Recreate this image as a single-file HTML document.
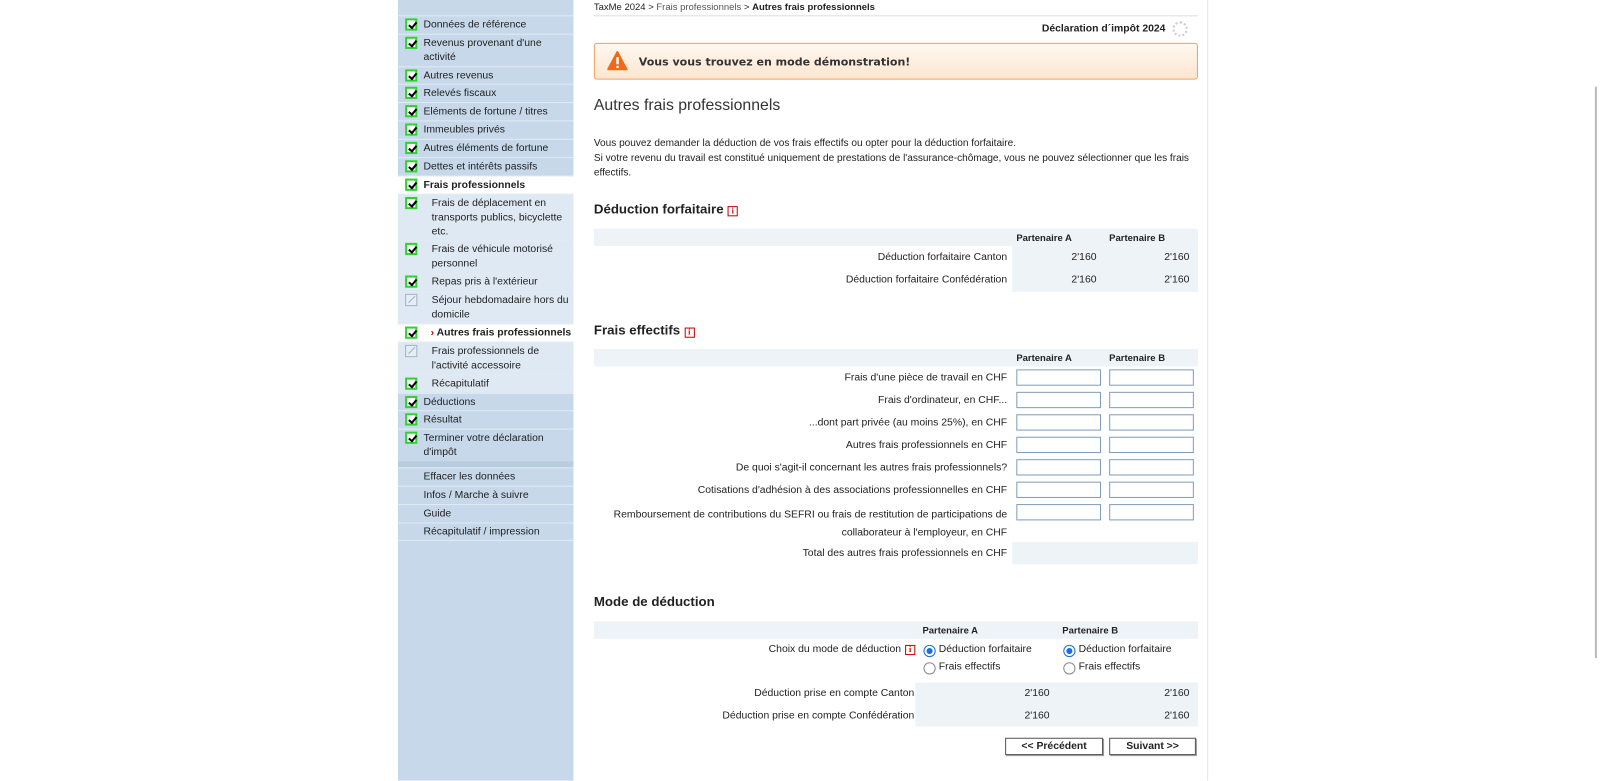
<!DOCTYPE html>
<html><head><meta charset="utf-8"><style>
*{margin:0;padding:0;box-sizing:border-box}
body{width:1600px;height:765px;background:#fff;overflow:hidden;margin:0}
#w{position:absolute;left:0;top:0;width:1568px;height:750px;transform:scale(1.0204);transform-origin:0 0;font-family:"Liberation Sans",Arial,sans-serif;font-size:10.2px;color:#222}
.a{position:absolute;white-space:nowrap}
#side{position:absolute;left:390px;top:0;width:172px;height:765px;background:#c6d8e9}
.r{position:absolute;left:0;width:172px;border-top:1px solid #e3ebf3;line-height:14px;padding-left:25px;padding-top:2px;white-space:nowrap}
.r.s{background:#dfe9f3;padding-left:33px}
.r.w{background:#fff}
.cb{position:absolute;left:7px;top:2px;width:12px;height:12px;border:2px solid #2fd12f;background:#fff}
.cb::after{content:"";position:absolute;left:2.5px;top:0px;width:3px;height:6px;border:solid #000;border-width:0 2px 2px 0;transform:rotate(40deg)}
.cg{position:absolute;left:7px;top:2px;width:12px;height:12px;border:1px solid #9fb3c5;background:#e5edf5}
.cg::after{content:"";position:absolute;left:1px;top:4px;width:9px;height:1px;background:#9fb3c5;transform:rotate(-45deg)}
.band{position:absolute;background:#eef3f8}
.h{font-size:13px;font-weight:bold;color:#222}
.i{display:inline-block;width:10px;height:10px;border:1px solid #c00;color:#c00;font-size:8px;line-height:8px;text-align:center;font-weight:bold;vertical-align:0px;margin-left:4px;font-family:"Liberation Serif",serif}
.inp{position:absolute;width:83px;height:16px;border:1px solid #7f9db9;background:#fff}
.lbl{position:absolute;right:581px;text-align:right;white-space:nowrap}
.b{font-weight:bold;font-size:9.3px}
.rad{position:absolute;width:12px;height:12px;border-radius:50%;border:1px solid #888;background:#fff}
.rad.on{border-color:#1a6fd8}.rad.on::after{content:"";position:absolute;left:2px;top:2px;width:6px;height:6px;border-radius:50%;background:#1a6fd8}
.btn{position:absolute;height:17px;border:1px solid #555;background:#fff;font-weight:bold;text-align:center;line-height:15px;box-shadow:1px 1px 0 #999}
</style></head><body><div id="w">
<div class="a" style="left:1183px;top:0;width:1px;height:765px;background:#e4e4e4"></div>
<div class="a" style="left:1563px;top:85px;width:2px;height:560px;background:#bbb"></div>
<div id="side">
<div class="r" style="top:15px;height:18px"><span class="cb"></span>Données de référence</div>
<div class="r" style="top:33px;height:32px"><span class="cb"></span>Revenus provenant d'une<br>activité</div>
<div class="r" style="top:65px;height:17px"><span class="cb"></span>Autres revenus</div>
<div class="r" style="top:82px;height:18px"><span class="cb"></span>Relevés fiscaux</div>
<div class="r" style="top:100px;height:18px"><span class="cb"></span>Eléments de fortune / titres</div>
<div class="r" style="top:118px;height:18px"><span class="cb"></span>Immeubles privés</div>
<div class="r" style="top:136px;height:18px"><span class="cb"></span>Autres éléments de fortune</div>
<div class="r" style="top:154px;height:18px"><span class="cb"></span>Dettes et intérêts passifs</div>
<div class="r w" style="top:172px;height:18px;font-weight:bold"><span class="cb"></span>Frais professionnels</div>
<div class="r s" style="top:190px;height:45px"><span class="cb"></span>Frais de déplacement en<br>transports publics, bicyclette<br>etc.</div>
<div class="r s" style="top:235px;height:32px"><span class="cb"></span>Frais de véhicule motorisé<br>personnel</div>
<div class="r s" style="top:267px;height:18px"><span class="cb"></span>Repas pris à l'extérieur</div>
<div class="r s" style="top:285px;height:32px"><span class="cg"></span>Séjour hebdomadaire hors du<br>domicile</div>
<div class="r s w" style="top:317px;height:18px;font-weight:bold;padding-left:32px"><span class="cb"></span><span style="color:#c00">›</span> Autres frais professionnels</div>
<div class="r s" style="top:335px;height:32px"><span class="cg"></span>Frais professionnels de<br>l'activité accessoire</div>
<div class="r s" style="top:367px;height:18px"><span class="cb"></span>Récapitulatif</div>
<div class="r" style="top:385px;height:17px"><span class="cb"></span>Déductions</div>
<div class="r" style="top:402px;height:18px"><span class="cb"></span>Résultat</div>
<div class="r" style="top:420px;height:32px"><span class="cb"></span>Terminer votre déclaration<br>d'impôt</div>
<div class="a" style="left:0;top:452px;width:172px;height:6px;background:#b9cde0"></div>
<div class="r" style="top:458px;height:18px">Effacer les données</div>
<div class="r" style="top:476px;height:18px">Infos / Marche à suivre</div>
<div class="r" style="top:494px;height:18px">Guide</div>
<div class="r" style="top:512px;height:18px;border-bottom:1px solid #e3ebf3">Récapitulatif / impression</div>
</div>

<div class="a" style="left:582px;top:2px;font-size:9.3px">TaxMe 2024 &gt; <span style="color:#555">Frais professionnels</span> &gt; <b>Autres frais professionnels</b></div>
<div class="a" style="left:582px;top:15px;width:592px;height:1px;background:#ddd"></div>
<div class="a" style="left:1021px;top:23px;font-weight:bold">Déclaration d´impôt 2024</div>
<div class="a" style="left:1149px;top:21px;width:15px;height:15px;border-radius:50%;border:2px dotted #ccc"></div>
<div class="a" style="left:582px;top:42px;width:592px;height:36px;border:1px solid #f0a060;border-radius:3px;background:linear-gradient(#fff8f0,#fde6d0)"></div>
<svg class="a" style="left:595px;top:50px" width="20" height="19" viewBox="0 0 20 19"><path d="M10 1 L19 18 H1 Z" fill="#f06a1a" stroke="#f06a1a" stroke-linejoin="round" stroke-width="2"/><rect x="9" y="6" width="2.4" height="7" fill="#fff"/><rect x="9" y="14.5" width="2.4" height="2.2" fill="#fff"/></svg>
<div class="a" style="left:626px;top:54px;font-family:'DejaVu Sans',sans-serif;font-weight:bold;font-size:10.8px;color:#333">Vous vous trouvez en mode démonstration!</div>
<div class="a" style="left:582px;top:95px;font-size:15.5px;color:#333">Autres frais professionnels</div>
<div class="a" style="left:582px;top:134px;line-height:14.5px;font-size:9.9px">Vous pouvez demander la déduction de vos frais effectifs ou opter pour la déduction forfaitaire.<br>Si votre revenu du travail est constitué uniquement de prestations de l'assurance-chômage, vous ne pouvez sélectionner que les frais<br>effectifs.</div>

<div class="a h" style="left:582px;top:197px">Déduction forfaitaire<span class="i">i</span></div>
<div class="band" style="left:582px;top:224px;width:592px;height:17px"></div>
<div class="band" style="left:992px;top:241px;width:182px;height:45px"></div>
<div class="a b" style="left:996px;top:228px">Partenaire A</div>
<div class="a b" style="left:1087px;top:228px">Partenaire B</div>
<div class="lbl" style="top:247px">Déduction forfaitaire Canton</div>
<div class="lbl" style="top:269px">Déduction forfaitaire Confédération</div>
<div class="a" style="left:1050px;top:247px">2'160</div><div class="a" style="left:1141px;top:247px">2'160</div>
<div class="a" style="left:1050px;top:269px">2'160</div><div class="a" style="left:1141px;top:269px">2'160</div>

<div class="a h" style="left:582px;top:316px">Frais effectifs<span class="i">i</span></div>
<div class="band" style="left:582px;top:342px;width:592px;height:17px"></div>
<div class="a b" style="left:996px;top:346px">Partenaire A</div>
<div class="a b" style="left:1087px;top:346px">Partenaire B</div>
<div class="lbl" style="top:365px">Frais d'une pièce de travail en CHF</div>
<div class="lbl" style="top:387px">Frais d'ordinateur, en CHF...</div>
<div class="lbl" style="top:409px">...dont part privée (au moins 25%), en CHF</div>
<div class="lbl" style="top:431px">Autres frais professionnels en CHF</div>
<div class="lbl" style="top:453px">De quoi s'agit-il concernant les autres frais professionnels?</div>
<div class="lbl" style="top:475px">Cotisations d'adhésion à des associations professionnelles en CHF</div>
<div class="lbl" style="top:496px;line-height:18px">Remboursement de contributions du SEFRI ou frais de restitution de participations de<br>collaborateur à l'employeur, en CHF</div>
<div class="lbl" style="top:537px">Total des autres frais professionnels en CHF</div>
<div class="band" style="left:992px;top:531px;width:182px;height:22px"></div>
<div class="inp" style="left:996px;top:362px"></div><div class="inp" style="left:1087px;top:362px"></div>
<div class="inp" style="left:996px;top:384px"></div><div class="inp" style="left:1087px;top:384px"></div>
<div class="inp" style="left:996px;top:406px"></div><div class="inp" style="left:1087px;top:406px"></div>
<div class="inp" style="left:996px;top:428px"></div><div class="inp" style="left:1087px;top:428px"></div>
<div class="inp" style="left:996px;top:450px"></div><div class="inp" style="left:1087px;top:450px"></div>
<div class="inp" style="left:996px;top:472px"></div><div class="inp" style="left:1087px;top:472px"></div>
<div class="inp" style="left:996px;top:494px"></div><div class="inp" style="left:1087px;top:494px"></div>

<div class="a h" style="left:582px;top:582px">Mode de déduction</div>
<div class="band" style="left:582px;top:609px;width:592px;height:17px"></div>
<div class="a b" style="left:904px;top:613px">Partenaire A</div>
<div class="a b" style="left:1041px;top:613px">Partenaire B</div>
<div class="a" style="right:671px;top:631px;text-align:right">Choix du mode de déduction<span class="i">i</span></div>
<div class="rad on" style="left:905px;top:632px"></div><div class="a" style="left:920px;top:631px">Déduction forfaitaire</div>
<div class="rad" style="left:905px;top:649px"></div><div class="a" style="left:920px;top:648px">Frais effectifs</div>
<div class="rad on" style="left:1042px;top:632px"></div><div class="a" style="left:1057px;top:631px">Déduction forfaitaire</div>
<div class="rad" style="left:1042px;top:649px"></div><div class="a" style="left:1057px;top:648px">Frais effectifs</div>
<div class="band" style="left:897px;top:669px;width:277px;height:43px"></div>
<div class="a" style="right:672px;top:674px">Déduction prise en compte Canton</div>
<div class="a" style="right:672px;top:696px">Déduction prise en compte Confédération</div>
<div class="a" style="left:1004px;top:674px">2'160</div><div class="a" style="left:1141px;top:674px">2'160</div>
<div class="a" style="left:1004px;top:696px">2'160</div><div class="a" style="left:1141px;top:696px">2'160</div>
<div class="btn" style="left:985px;top:723px;width:96px">&lt;&lt; Précédent</div>
<div class="btn" style="left:1087px;top:723px;width:85px">Suivant &gt;&gt;</div>
</div></body></html>
